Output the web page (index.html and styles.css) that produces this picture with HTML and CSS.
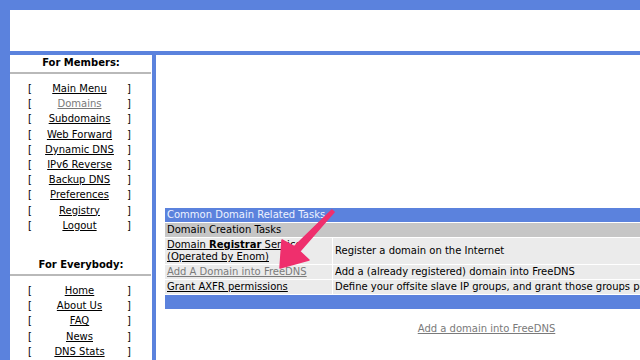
FILE: index.html
```html
<!DOCTYPE html>
<html lang="en">

<head>
    <meta charset="UTF-8">
    <title>FreeDNS - Domains</title>
    <link rel="stylesheet" href="styles.css">
</head>

<body>
    <div class="page">
        <div class="header"></div>
        <div class="layout">
            <div class="sidebar">
                <div class="side-title">For Members:</div>
                <div class="side-rule"></div>
                <ul class="side-menu">
                    <li><span>[</span><a href="#">Main Menu</a><span>]</span></li>
                    <li><span>[</span><a href="#" class="visited">Domains</a><span>]</span></li>
                    <li><span>[</span><a href="#">Subdomains</a><span>]</span></li>
                    <li><span>[</span><a href="#">Web Forward</a><span>]</span></li>
                    <li><span>[</span><a href="#">Dynamic DNS</a><span>]</span></li>
                    <li><span>[</span><a href="#">IPv6 Reverse</a><span>]</span></li>
                    <li><span>[</span><a href="#">Backup DNS</a><span>]</span></li>
                    <li><span>[</span><a href="#">Preferences</a><span>]</span></li>
                    <li><span>[</span><a href="#">Registry</a><span>]</span></li>
                    <li><span>[</span><a href="#">Logout</a><span>]</span></li>
                </ul>
                <div class="side-title second">For Everybody:</div>
                <div class="side-rule"></div>
                <ul class="side-menu">
                    <li><span>[</span><a href="#">Home</a><span>]</span></li>
                    <li><span>[</span><a href="#">About Us</a><span>]</span></li>
                    <li><span>[</span><a href="#">FAQ</a><span>]</span></li>
                    <li><span>[</span><a href="#">News</a><span>]</span></li>
                    <li><span>[</span><a href="#">DNS Stats</a><span>]</span></li>
                </ul>
            </div>

            <div class="main">
                <div class="ad-slot"></div>
                <table class="tasks">
                    <tr>
                        <td colspan="2" class="head">Common Domain Related Tasks</td>
                    </tr>
                    <tr>
                        <td colspan="2" class="subhead">Domain Creation Tasks</td>
                    </tr>
                    <tr>
                        <td class="task-name"><a href="#">Domain <b>Registrar</b> Service (Operated by Enom)</a></td>
                        <td>Register a domain on the Internet</td>
                    </tr>
                    <tr>
                        <td class="task-name"><a href="#" class="visited">Add A Domain into FreeDNS</a></td>
                        <td>Add a (already registered) domain into FreeDNS</td>
                    </tr>
                    <tr>
                        <td class="task-name"><a href="#">Grant AXFR permissions</a></td>
                        <td>Define your offsite slave IP groups, and grant those groups permission to AXFR your domains</td>
                    </tr>
                    <tr>
                        <td colspan="2" class="foot">&nbsp;</td>
                    </tr>
                </table>
                <div class="add-link"><a href="#" class="visited">Add a domain into FreeDNS</a></div>
            </div>
        </div>
    </div>

    <!-- annotation arrow -->
    <svg class="callout" width="640" height="360" viewBox="0 0 640 360">
        <polygon points="331.9,210 294.4,246.6 282,240 280,268 309,260 299.6,251.4 334.1,212"
            fill="#ef2f6d" stroke="#ef2f6d" stroke-width="1.5" stroke-linejoin="round" />
    </svg>
</body>

</html>
```

FILE: styles.css
```css
/* page frame */
html {
    overflow: hidden;
}

body {
    margin: 0;
    padding: 10px 0 0 10px;
    background-color: #5b82dd;
    font-family: "DejaVu Sans", Verdana, sans-serif;
    font-size: 10px;
    color: black;
}

a {
    color: black;
}

a.visited {
    color: #7a7a7a;
}

.page {
    width: 807px;
}

.header {
    height: 41px;
    background-color: white;
}

.layout {
    display: flex;
    gap: 4px;
    margin-top: 4px;
}

/* left menu */
.sidebar {
    width: 142px;
    flex-shrink: 0;
    background-color: white;
    padding-bottom: 40px;
}

.side-title {
    text-align: center;
    font-weight: bold;
    line-height: 15px;
}

.side-title.second {
    margin-top: 24px;
}

.side-rule {
    margin-top: 2px;
    border-top: 2px solid #b9b9b9;
    margin-right: 1px;
}

.side-menu {
    list-style: none;
    margin: 0;
    padding: 7px 21px 0 18px;
}

.side-menu li {
    display: grid;
    grid-template-columns: 10px 1fr 10px;
    line-height: 15.2px;
}

.side-menu li a {
    text-align: center;
}

.side-menu li span:last-child {
    text-align: right;
}

/* main content */
.main {
    flex: 1;
    background-color: white;
    padding: 8px;
    min-height: 400px;
}

.ad-slot {
    height: 144px;
}

.tasks {
    width: 100%;
    border-collapse: separate;
    border-spacing: 1px;
    white-space: nowrap;
}

.tasks td {
    padding: 1px 2px;
    line-height: 12px;
    background-color: #ebebeb;
    vertical-align: middle;
}

.tasks td.head {
    background-color: #5b82dd;
    color: #eef2ff;
}

.tasks td.subhead {
    background-color: #c6c6c6;
}

.tasks td.foot {
    background-color: #5b82dd;
}

.tasks td.task-name {
    width: 163px;
    white-space: normal;
}

.add-link {
    text-align: center;
    margin-top: 12px;
    line-height: 14px;
}

/* overlay */
.callout {
    position: absolute;
    left: 0;
    top: 0;
    pointer-events: none;
}
```
